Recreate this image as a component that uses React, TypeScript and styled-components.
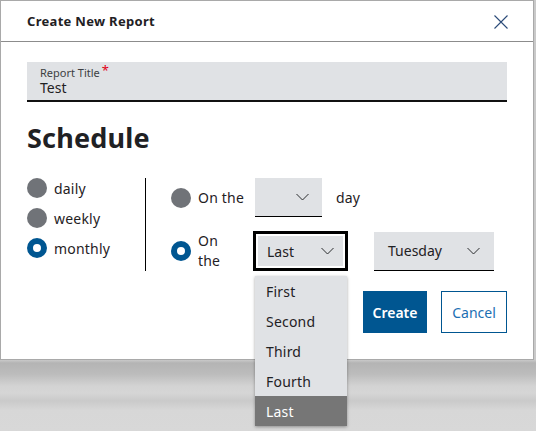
import React from "react";
import styled, {createGlobalStyle} from "styled-components";

const GlobalStyle = createGlobalStyle`
  html, body {
    margin: 0;
    padding: 0;
    width: 536px;
    height: 431px;
    overflow: hidden;
    font-family: "Noto Sans", "Open Sans", Arial, sans-serif;
    color: #1f2124;
  }
`;

const Backdrop = styled.div`
  width: 536px;
  height: 431px;
  background: linear-gradient(
    to bottom,
    #c9c9c9 0,
    #c9c9c9 360px,
    #b4b4b4 363px,
    #bcbcbc 374px,
    #d3d3d3 386px,
    #d6d6d6 393px,
    #cacaca 401px,
    #d7d7d7 410px,
    #d8d8d8 100%
  );
`;

const Dialog = styled.div`
  position: relative;
  width: 534px;
  box-sizing: border-box;
  background: #fff;
  border: 1px solid #a9a9a9;
  display: flex;
  flex-direction: column;
`;

const Header = styled.div`
  height: 41px;
  box-sizing: border-box;
  display: flex;
  align-items: center;
  justify-content: space-between;
  padding: 0 25px 0 26px;
  border-bottom: 1px solid #8c8c8c;
`;

const HeaderTitle = styled.div`
  font-size: 13px;
  font-weight: 700;
  letter-spacing: 0.3px;
  color: #1f2124;
`;

const CloseButton = styled.div`
  width: 14px;
  height: 14px;
  display: flex;
  align-items: center;
  justify-content: center;
  margin-top: 1px;
  cursor: pointer;
`;

const Body = styled.div`
  display: flex;
  flex-direction: column;
  padding: 20px 26px 26px 26px;
`;

const TextField = styled.div`
  height: 40px;
  box-sizing: border-box;
  background: #e0e2e5;
  border-bottom: 2px solid #111;
  padding: 4px 13px 0 13px;
  display: flex;
  flex-direction: column;
`;

const FieldLabel = styled.div`
  display: flex;
  align-items: flex-start;
  height: 13px;
  font-size: 11px;
  line-height: 13px;
  color: #3d3f42;
`;

const Required = styled.span`
  color: #e20015;
  font-size: 13px;
  line-height: 9px;
  margin-left: 2px;
`;

const FieldValue = styled.div`
  font-size: 14px;
  line-height: 17px;
  color: #1f2124;
`;

const SectionTitle = styled.h2`
  margin: 20px 0 0 0;
  font-size: 27px;
  line-height: 32px;
  font-weight: 700;
  letter-spacing: 0.2px;
  color: #1f2124;
`;

const ScheduleRow = styled.div`
  display: flex;
  margin-top: 24px;
`;

const FrequencyList = styled.div`
  display: flex;
  flex-direction: column;
  gap: 10px;
  width: 118px;
`;

const RadioItem = styled.label`
  display: flex;
  align-items: center;
  gap: 7px;
  height: 20px;
  font-size: 14px;
  letter-spacing: 0.2px;
  cursor: pointer;
`;

const Radio = styled.span<{ $checked?: boolean }>`
  flex: none;
  width: 20px;
  height: 20px;
  box-sizing: border-box;
  border-radius: 50%;
  background: ${p => p.$checked ? "#fff" : "#707378"};
  border: ${p => p.$checked ? "6px solid #005691" : "none"};
`;

const Divider = styled.div`
  width: 1px;
  background: #000;
`;

const MonthlyOptions = styled.div`
  display: flex;
  flex-direction: column;
  gap: 14px;
  padding-left: 25px;
`;

const OptionRow = styled.div`
  display: flex;
  align-items: center;
`;

const OptionLabel = styled.div<{ $stacked?: boolean }>`
  width: ${p => p.$stacked ? "55px" : "57px"};
  padding-right: ${p => p.$stacked ? "25px" : "0"};
  box-sizing: border-box;
  margin-left: 7px;
  font-size: 14px;
  line-height: 20px;
  letter-spacing: 0.2px;
`;

const SelectWrap = styled.div`
  position: relative;
  margin-right: 26px;
`;

const Select = styled.div<{ $width: number; $focused?: boolean; $pad: number }>`
  width: ${p => p.$width}px;
  height: ${p => p.$focused ? 40 : 39}px;
  box-sizing: border-box;
  display: flex;
  align-items: center;
  justify-content: space-between;
  padding: 0 ${p => p.$pad}px;
  background: #e0e2e5;
  font-size: 14px;
  color: #1f2124;
  border: ${p => p.$focused ? "3px solid #000" : "none"};
  border-bottom: ${p => p.$focused ? "3px solid #000" : "1px solid #000"};
  box-shadow: ${p => p.$focused ? "inset 0 0 0 2px #fff" : "none"};
  cursor: pointer;
`;

const SuffixText = styled.span`
  margin-left: 14px;
  font-size: 14px;
  letter-spacing: 0.2px;
`;

const OptionList = styled.ul`
  position: absolute;
  top: 45px;
  left: 2px;
  width: 92px;
  margin: 0;
  padding: 0;
  list-style: none;
  background: #e0e2e5;
  box-shadow: 0 1px 3px rgba(0, 0, 0, 0.35);
  z-index: 10;
`;

const OptionItem = styled.li<{ $selected?: boolean }>`
  height: 30px;
  display: flex;
  align-items: center;
  padding-left: 11px;
  font-size: 14px;
  letter-spacing: 0.2px;
  color: ${p => p.$selected ? "#fff" : "#1f2124"};
  background: ${p => p.$selected ? "#767676" : "transparent"};
`;

const ButtonRow = styled.div`
  display: flex;
  justify-content: flex-end;
  gap: 14px;
  margin-top: 20px;
`;

const Button = styled.button<{ $primary?: boolean; $width: number }>`
  width: ${p => p.$width}px;
  height: 42px;
  box-sizing: border-box;
  padding: 0;
  font-family: inherit;
  font-size: 14px;
  font-weight: ${p => p.$primary ? 600 : 400};
  color: ${p => p.$primary ? "#fff" : "#1b6fb3"};
  background: ${p => p.$primary ? "#005691" : "#fff"};
  border: 1px solid #005691;
  cursor: pointer;
`;

const Chevron = () => (
    <svg width="13" height="8" viewBox="0 0 13 8">
        <polyline points="0.5,1 6.5,7 12.5,1" fill="none" stroke="#2a2c2f" strokeWidth="1" />
    </svg>
);

const ordinals = ["First", "Second", "Third", "Fourth", "Last"];

export default function App() {
    const frequencies = [
        {label: "daily", checked: false},
        {label: "weekly", checked: false},
        {label: "monthly", checked: true},
    ];

    return (
        <>
            <GlobalStyle />
            <Backdrop>
                <Dialog>
                    <Header>
                        <HeaderTitle>Create New Report</HeaderTitle>
                        <CloseButton>
                            <svg width="14" height="14" viewBox="0 0 14 14">
                                <path d="M0.5 0.5 L13.5 13.5 M13.5 0.5 L0.5 13.5" stroke="#2b4a78" strokeWidth="1.1" />
                            </svg>
                        </CloseButton>
                    </Header>
                    <Body>
                        <TextField>
                            <FieldLabel>Report Title<Required>*</Required></FieldLabel>
                            <FieldValue>Test</FieldValue>
                        </TextField>
                        <SectionTitle>Schedule</SectionTitle>
                        <ScheduleRow>
                            <FrequencyList>
                                {frequencies.map(f => (
                                    <RadioItem key={f.label}>
                                        <Radio $checked={f.checked} />
                                        {f.label}
                                    </RadioItem>
                                ))}
                            </FrequencyList>
                            <Divider />
                            <MonthlyOptions>
                                <OptionRow>
                                    <Radio />
                                    <OptionLabel>On the</OptionLabel>
                                    <Select $width={67} $pad={13}>
                                        <span />
                                        <Chevron />
                                    </Select>
                                    <SuffixText>day</SuffixText>
                                </OptionRow>
                                <OptionRow>
                                    <Radio $checked />
                                    <OptionLabel $stacked>On the</OptionLabel>
                                    <SelectWrap>
                                        <Select $width={95} $pad={11} $focused>
                                            <span>Last</span>
                                            <Chevron />
                                        </Select>
                                        <OptionList>
                                            {ordinals.map(o => (
                                                <OptionItem key={o} $selected={o === "Last"}>{o}</OptionItem>
                                            ))}
                                        </OptionList>
                                    </SelectWrap>
                                    <Select $width={120} $pad={14}>
                                        <span>Tuesday</span>
                                        <Chevron />
                                    </Select>
                                </OptionRow>
                            </MonthlyOptions>
                        </ScheduleRow>
                        <ButtonRow>
                            <Button $primary $width={64}>Create</Button>
                            <Button $width={66}>Cancel</Button>
                        </ButtonRow>
                    </Body>
                </Dialog>
            </Backdrop>
        </>
    );
}
